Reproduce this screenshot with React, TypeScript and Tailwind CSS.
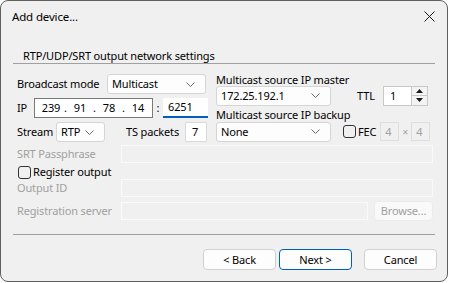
import React from "react";

const font = { fontFamily: '"Noto Sans", "Segoe UI", sans-serif' };

function Chevron() {
  return (
    <svg width="9" height="5" viewBox="0 0 9 5" className="shrink-0">
      <path d="M0.5 0.5 L4.5 4.5 L8.5 0.5" fill="none" stroke="#6a6a6a" strokeWidth="1" />
    </svg>
  );
}

function Combo({ value, w }: { value: string; w: string }) {
  return (
    <div
      className={`${w} h-[20px] shrink-0 flex items-center justify-between pl-[4px] pr-[10px] bg-[#fdfdfd] border border-[#d5d5d5] rounded-[3px] text-black`}
    >
      <span>{value}</span>
      <Chevron />
    </div>
  );
}

function Check({ label, className = "" }: { label: string; className?: string }) {
  return (
    <div className={`flex items-center gap-[2px] ${className}`}>
      <div className="w-[13px] h-[13px] shrink-0 rounded-[3px] border border-[#333333]" />
      <span>{label}</span>
    </div>
  );
}

export default function App() {
  return (
    <div
      className="w-[450px] h-[283px] bg-white text-[11px] leading-[14px] text-black whitespace-nowrap tracking-[-0.15px]"
      style={font}
    >
      <div className="w-[448px] h-[282px] flex flex-col bg-[#f0f0f0] border border-[#5f5f5f] rounded-[8px] overflow-hidden">
        {/* title bar */}
        <div className="h-[31px] flex items-center justify-between pl-[11px] pr-[10px] text-[11.5px]">
          <span>Add device...</span>
          <svg width="11" height="11" viewBox="0 0 11 11" className="mr-[2px]">
            <path d="M0.5 0.5 L10.5 10.5 M10.5 0.5 L0.5 10.5" stroke="#1a1a1a" strokeWidth="1" />
          </svg>
        </div>

        {/* header */}
        <div className="h-[31px] pl-[22px] pt-[17px]">RTP/UDP/SRT output network settings</div>
        <div className="mx-[12px] h-px bg-[#a0a0a0]" />

        {/* main fields */}
        <div className="flex pl-[16px] mt-[9px]">
          <div className="w-[191px] pt-[1px] flex flex-col gap-[4px]">
            <div className="h-[20px] flex items-center">
              <span className="w-[90px]">Broadcast mode</span>
              <Combo value="Multicast" w="w-[99px]" />
            </div>
            <div className="h-[20px] flex items-center">
              <span className="w-[17px]">IP</span>
              <div className="w-[119px] h-[20px] flex items-center pl-[5px] bg-white border border-[#7a7a7a]">
                <span className="w-[22px] text-center">239</span>
                <span className="w-[7px] text-center">.</span>
                <span className="w-[22px] text-center">91</span>
                <span className="w-[7px] text-center">.</span>
                <span className="w-[22px] text-center">78</span>
                <span className="w-[7px] text-center">.</span>
                <span className="w-[22px] text-center">14</span>
              </div>
              <span className="w-[10px] text-center">:</span>
              <div className="w-[45px] h-[20px] flex items-center pl-[5px] bg-white border-b-2 border-[#005fb8]">
                6251
              </div>
            </div>
            <div className="h-[20px] flex items-center">
              <span className="w-[39px]">Stream</span>
              <Combo value="RTP" w="w-[49px]" />
              <span className="ml-[21px] w-[59px]">TS packets</span>
              <div className="w-[22px] h-[20px] flex items-center pl-[6px] bg-white border border-[#d9d9d9]">7</div>
            </div>
          </div>

          <div className="ml-[8px] w-[217px] flex flex-col">
            <div className="h-[13px] leading-[13px]">Multicast source IP master</div>
            <div className="h-[19px] flex items-center">
              <Combo value="172.25.192.1" w="w-[115px]" />
              <span className="ml-[26px] w-[26px]">TTL</span>
              <div className="w-[45px] h-[20px] flex bg-white border border-[#c8c8c8]">
                <span className="flex-1 pl-[6px] leading-[18px]">1</span>
                <div className="w-[16px] flex flex-col border-l border-[#c8c8c8] bg-[#f3f3f3]">
                  <div className="flex-1 flex items-center justify-center border-b border-[#c8c8c8]">
                    <svg width="7" height="4" viewBox="0 0 7 4"><path d="M0 4 L3.5 0 L7 4 Z" fill="#1a1a1a" /></svg>
                  </div>
                  <div className="flex-1 flex items-center justify-center">
                    <svg width="7" height="4" viewBox="0 0 7 4"><path d="M0 0 L3.5 4 L7 0 Z" fill="#1a1a1a" /></svg>
                  </div>
                </div>
              </div>
            </div>
            <div className="mt-[3px] h-[13px] leading-[13px]">Multicast source IP backup</div>
            <div className="mt-[1px] h-[19px] flex items-center">
              <Combo value="None" w="w-[115px]" />
              <Check label="FEC" className="ml-[12px]" />
              <div className="ml-[4px] w-[19px] h-[19px] flex items-center pl-[4px] text-[#a0a0a0] border border-[#dedede]">4</div>
              <span className="w-[12px] text-center text-[10px] text-[#a0a0a0]">×</span>
              <div className="w-[19px] h-[19px] flex items-center pl-[4px] text-[#a0a0a0] border border-[#dedede]">4</div>
            </div>
          </div>
        </div>

        {/* lower rows */}
        <div className="pl-[16px] flex flex-col">
          <div className="mt-[3px] h-[18px] flex items-center">
            <span className="w-[104px] text-[#a0a0a0]">SRT Passphrase</span>
            <div className="w-[312px] h-[18px] border border-[#fafafa]" />
          </div>
          <Check label="Register output" className="mt-[1px] h-[16px] pl-[1px]" />
          <div className="mt-[-1px] h-[18px] flex items-center">
            <span className="w-[104px] text-[#a0a0a0]">Output ID</span>
            <div className="w-[312px] h-[18px] border border-[#fafafa]" />
          </div>
          <div className="mt-[4px] h-[20px] flex items-center">
            <span className="w-[104px] text-[#a0a0a0]">Registration server</span>
            <div className="w-[247px] h-[18px] border border-[#fafafa]" />
            <div className="ml-[6px] w-[59px] h-[20px] flex items-center justify-center rounded-[4px] bg-[#f9f9f9] border border-[#ececec] text-[#a0a0a0]">
              Browse...
            </div>
          </div>
        </div>

        <div className="mt-[13px] mx-[12px] h-px bg-[#a0a0a0]" />

        {/* buttons */}
        <div className="mt-[14px] flex justify-end pr-[10px]">
          <div className="w-[73px] h-[21px] flex items-center justify-center rounded-[4px] bg-[#fdfdfd] border border-[#d0d0d0]">&lt; Back</div>
          <div className="ml-[3px] w-[73px] h-[21px] flex items-center justify-center rounded-[4px] bg-[#fdfdfd] border border-[#005fb8]">Next &gt;</div>
          <div className="ml-[12px] w-[73px] h-[21px] flex items-center justify-center rounded-[4px] bg-[#fdfdfd] border border-[#d0d0d0]">Cancel</div>
        </div>
      </div>
    </div>
  );
}
